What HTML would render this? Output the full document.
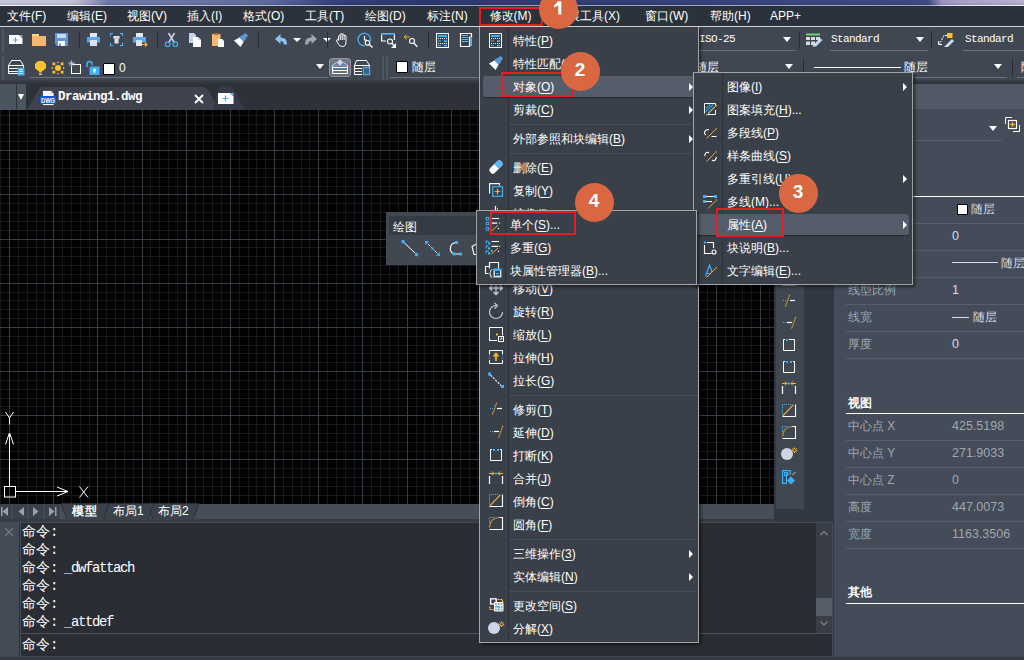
<!DOCTYPE html><html><head><meta charset="utf-8"><title>CAD</title><style>
*{box-sizing:border-box;margin:0;padding:0}
html,body{width:1024px;height:660px;overflow:hidden}
body{position:relative;background:#323842;font-family:"Liberation Sans",sans-serif;font-size:12px;color:#fff;line-height:1}
.a{position:absolute}
.t{position:absolute;white-space:nowrap;line-height:14px;height:14px}
.mono{font-family:"Liberation Mono",monospace}
.u{text-decoration:underline;text-underline-offset:2px;text-decoration-thickness:1px}
.ic{position:absolute;overflow:visible}
.menu{position:absolute;background:#3a4049;border:1px solid #a4a4a4;box-shadow:2px 2px 3px rgba(0,0,0,.5)}
.mi{position:absolute;white-space:nowrap;line-height:14px;height:14px;color:#fff}
.sepv{position:absolute;width:1px;background:#2b3038}
.arr{position:absolute;width:0;height:0;border-left:4px solid #fff;border-top:4px solid transparent;border-bottom:4px solid transparent}
.dn{position:absolute;width:0;height:0;border-top:5px solid #fff;border-left:4.5px solid transparent;border-right:4.5px solid transparent}
.red{position:absolute;border:2px solid #e81c24}
.circ{position:absolute;width:39px;height:39px;border-radius:50%;background:#d96742;color:#fff;font-weight:bold;font-size:19px;text-align:center;line-height:36px}
.ul{position:absolute;height:1px;background:#6d737c}
.pl{position:absolute;left:848px;color:#a0a7b1;white-space:nowrap;line-height:14px}
.pv{position:absolute;left:952px;color:#a0a7b1;white-space:nowrap;line-height:14px;font-size:12.5px}
.ps{position:absolute;left:846px;right:0;height:1px;background:#56606c}
.cmd{position:absolute;left:22px;white-space:nowrap;font-size:14px;line-height:16px;height:16px;color:#fff;font-family:"Liberation Mono",monospace}
.cmd i{font-style:normal;letter-spacing:-1.4px}
</style></head><body>
<div class="a" style="left:0;top:0;width:1024px;height:5px;background:linear-gradient(90deg,#c6c4d9 0,#c2c0d7 75px,#9fa1c3 90px,#6f78a6 108px,#6a74a4 200px,#5e6a9c 270px,#4a568c 300px,#34417a 335px,#2c396c 420px,#313e72 600px,#36437a 700px,#3a477d 800px,#3d4a80 928px,#9d92be 942px,#a99ec5 960px,#b9b0d0 1024px)"></div>
<div class="a" style="left:0;top:3px;width:1024px;height:2px;background:rgba(20,20,50,.08)"></div>
<div class="a" style="left:0;top:5px;width:1024px;height:1px;background:linear-gradient(90deg,#f2f2f6 0,#efeff4 80px,#b9bdd6 110px,#aeb3d0 300px,#9aa0c4 340px,#9ca2c5 930px,#e0dcea 945px,#ece8f2 1024px)"></div>
<div class="a" style="left:0px;top:6px;width:1024px;height:20px;background:#2c323b;"></div>
<div class="a" style="left:0px;top:26px;width:1024px;height:1px;background:#d4d4d4;"></div>
<div class="t" style="left:7px;top:9px;">文件(F)</div>
<div class="t" style="left:67px;top:9px;">编辑(E)</div>
<div class="t" style="left:127px;top:9px;">视图(V)</div>
<div class="t" style="left:187px;top:9px;">插入(I)</div>
<div class="t" style="left:243px;top:9px;">格式(O)</div>
<div class="t" style="left:305px;top:9px;">工具(T)</div>
<div class="t" style="left:365px;top:9px;">绘图(D)</div>
<div class="t" style="left:427px;top:9px;">标注(N)</div>
<div class="t" style="left:489.5px;top:9px;">修改(M)</div>
<div class="t" style="left:556px;top:9px;">扩展工具(X)</div>
<div class="t" style="left:645px;top:9px;">窗口(W)</div>
<div class="t" style="left:710px;top:9px;">帮助(H)</div>
<div class="t" style="left:770px;top:9px;">APP+</div>
<div class="a" style="left:0px;top:27px;width:1024px;height:54px;background:#414752;"></div>
<div class="a" style="left:0;top:80px;width:1024px;height:4px;background:linear-gradient(#3b414b,#2d3138)"></div>
<div class="a" style="left:2px;top:29px;width:2px;height:24px;background:#4c565f;"></div>
<div class="a" style="left:2px;top:56px;width:2px;height:24px;background:#4c565f;"></div>
<svg class="ic" style="left:8px;top:33px" width="16" height="13" viewBox="0 0 16 13"><path d="M1 2H11L14.500 5.500V11H1Z" fill="#fff"/><path d="M11.500 2H14.500V5Z" fill="#6bb6f2"/><path d="M7.500 4.200V9.800M4.700 7H10.300" stroke="#3fb0f4" stroke-width="1"/></svg>
<svg class="ic" style="left:31px;top:32px" width="16" height="15" viewBox="0 0 16 15"><path d="M1 2H8V4.500H1Z" fill="#fad58c"/><path d="M1 4H15V14H1Z" fill="#f6b76f"/></svg>
<svg class="ic" style="left:54px;top:32px" width="16" height="15" viewBox="0 0 16 15"><path d="M1 1H14V14H3L1 12Z" fill="#5d95d6"/><path d="M3 2H12V6H3Z" fill="#cbd8ec"/><path d="M4 9H11V14H4Z" fill="#fff"/><path d="M5 11.500H7V14H5Z" fill="#5d95d6"/></svg>
<div class="a" style="left:79px;top:31px;width:1px;height:18px;background:#2a2e35;"></div>
<svg class="ic" style="left:86px;top:32px" width="16" height="15" viewBox="0 0 16 15"><path d="M4 1H11V6H4Z" fill="#e4e7f0"/><path d="M1 5H14V10.500H1Z" fill="#5aa9ea"/><path d="M4 8H11V14H4Z" fill="#dce1ec"/></svg>
<svg class="ic" style="left:109px;top:32px" width="16" height="15" viewBox="0 0 16 15"><path d="M1.500 4V1.500H4M11 1.500H13.500V4M13.500 11V13.500H11M4 13.500H1.500V11" stroke="#5ab4f5" stroke-width="1.100" fill="none"/><path d="M4.500 4H10.500V6.500H4.500Z" fill="#e4e7f0"/><path d="M5.500 6H9.500V11.500H5.500Z" fill="#dce1ec"/><path d="M4.500 5.500H10.500V7H4.500Z" fill="#b9c6dc"/></svg>
<svg class="ic" style="left:132px;top:32px" width="17" height="16" viewBox="0 0 17 16"><path d="M4 1H11V6H4Z" fill="#e4e7f0"/><path d="M1 5H14V10.500H1Z" fill="#5aa9ea"/><path d="M4 8H10V14H4Z" fill="#dce1ec"/><path d="M10 12.500H15M13 10.500L15 12.500L13 14.500" stroke="#f5b731" stroke-width="1.200" fill="none"/></svg>
<div class="a" style="left:157px;top:31px;width:1px;height:18px;background:#2a2e35;"></div>
<svg class="ic" style="left:164px;top:32px" width="16" height="16" viewBox="0 0 16 16"><path d="M4.500 1L10.500 11M10.500 1L4.500 11" stroke="#c2cde0" stroke-width="1.700" fill="none"/><circle cx="3.700" cy="12.200" r="2.300" stroke="#3fb0f4" stroke-width="1.200" fill="none"/><circle cx="11.300" cy="12.200" r="2.300" stroke="#3fb0f4" stroke-width="1.200" fill="none"/></svg>
<svg class="ic" style="left:188px;top:32px" width="14" height="16" viewBox="0 0 14 16"><path d="M1 1H6L8 3V11H1Z" fill="#c3d4ec"/><path d="M5 5H10L13 8V15H5Z" fill="#fff"/><path d="M10 5V8H13Z" fill="#d0d7e2"/></svg>
<svg class="ic" style="left:211px;top:32px" width="14" height="16" viewBox="0 0 14 16"><path d="M1 2H9.500V14H1Z" fill="#f6b76f"/><path d="M3 1H7.500V3H3Z" fill="#b4622d"/><path d="M7 7H11L13 9V15H7Z" fill="#fff"/><path d="M11 7V9H13Z" fill="#d0d7e2"/></svg>
<svg class="ic" style="left:233px;top:32px" width="16" height="16" viewBox="0 0 16 16"><path d="M9 3.500L12.500 1L15 3.500L12.500 7Z" fill="#5d95d6"/><path d="M6 5L9.500 3L13 7.500L10 10Z" fill="#5d95d6"/><path d="M1 8.500L6.500 5.500L10.500 10L7.500 15Z" fill="#fff"/></svg>
<div class="a" style="left:258px;top:31px;width:1px;height:18px;background:#2a2e35;"></div>
<svg class="ic" style="left:274px;top:33px" width="14" height="12" viewBox="0 0 14 12"><path d="M6.500 1L1 6L6.500 11V8Q9.500 8 10 11.500H13Q13.500 4.500 6.500 4.500Z" fill="#8ec3f5"/></svg>
<div class="dn" style="left:293px;top:38px;border-top-width:4px;border-left-width:4px;border-right-width:4px"></div>
<svg class="ic" style="left:304px;top:33px" width="14" height="12" viewBox="0 0 14 12"><path d="M7.500 1L13 6L7.500 11V8Q4.500 8 4 11.500H1Q.5 4.500 7.500 4.500Z" fill="#a3a7ad"/></svg>
<div class="dn" style="left:323px;top:38px;border-top-width:4px;border-left-width:4px;border-right-width:4px"></div>
<div class="a" style="left:327px;top:31px;width:1px;height:18px;background:#2a2e35;"></div>
<svg class="ic" style="left:335px;top:32px" width="14" height="16" viewBox="0 0 14 16"><path d="M3.500 8.500V4.500Q3.500 3.500 4.500 3.500Q5.300 3.500 5.300 4.500V2.500Q5.300 1.500 6.300 1.500Q7.200 1.500 7.200 2.500V2.800Q7.200 2 8.200 2Q9.100 2 9.100 3V4Q9.100 3.300 10 3.300Q11 3.300 11 4.300V10Q11 14.500 7.500 14.500H7Q5 14.500 3.800 12.500L1.500 9Q1.200 8 2 7.700Q2.800 7.500 3.500 8.500ZM5.300 4.500V8M7.200 2.800V8M9.100 4V8" stroke="#fff" stroke-width="1" fill="none"/></svg>
<svg class="ic" style="left:357px;top:32px" width="17" height="17" viewBox="0 0 17 17"><path d="M8 13.800A6.300 6.300 0 1 1 13.500 9" stroke="#3fb0f4" stroke-width="1.300" fill="none"/><path d="M7.500 4V8H10" stroke="#fff" stroke-width="1.200" fill="none"/><circle cx="10.500" cy="10.800" r="2.300" stroke="#fff" stroke-width="1.100" fill="none"/><path d="M12.300 12.500L15.500 15.500" stroke="#fff" stroke-width="1.300"/></svg>
<svg class="ic" style="left:381px;top:32px" width="16" height="17" viewBox="0 0 16 17"><path d="M.600 2.500V9H5M13.400 2.500V8" stroke="#fff" stroke-width="1.200" fill="none"/><path d="M0 1H14V2.600H0Z" fill="#5ab4f5"/><circle cx="9" cy="9.500" r="2.500" stroke="#fff" stroke-width="1.100" fill="none"/><path d="M10.800 11.300L13 13.500" stroke="#fff" stroke-width="1.300"/><path d="M15 11V16H10Z" fill="#fff"/></svg>
<svg class="ic" style="left:403px;top:32px" width="16" height="16" viewBox="0 0 16 16"><path d="M1.200 5H6.500M3.500 2.700L1.200 5L3.500 7.300" stroke="#f5b731" stroke-width="1" fill="none"/><circle cx="9" cy="9" r="2.500" stroke="#fff" stroke-width="1.100" fill="none"/><path d="M10.800 11L14.300 14.800" stroke="#fff" stroke-width="1.300"/></svg>
<div class="a" style="left:428px;top:31px;width:1px;height:18px;background:#2a2e35;"></div>
<svg class="ic" style="left:435px;top:32px" width="15" height="17" viewBox="0 0 15 17"><rect x="1.500" y="1.500" width="12" height="14" fill="none" stroke="#fff" stroke-width="1"/><path d="M3 3H12V5H3Z" fill="#3fb0f4"/><path d="M3 6.500H4M5 6.500H6M7 6.500H8M9 6.500H10M11 6.500H12M3 11.500H4M5 11.500H6M7 11.500H8M9 11.500H10M11 11.500H12" stroke="#dfe6f2" stroke-width="1"/><path d="M3 8.500H6V9.500H3ZM9 8.300H12V10H9ZM3 13H6V14H3ZM9 12.800H12V14.500H9Z" fill="#3fb0f4"/></svg>
<svg class="ic" style="left:459px;top:32px" width="15" height="17" viewBox="0 0 15 17"><path d="M1.500 1.500H12.500V5H10.500V14.500H1.500Z" fill="#3b404a" stroke="#fff" stroke-width="1.200"/><path d="M3 3H9V4H3ZM3 5H9V6H3ZM3 7H9V8H3ZM3 9H9V10H3Z" fill="#5ab4f5"/><path d="M11.200 6.200H13V14H11.200Z" fill="#5ab4f5"/></svg>
<svg class="ic" style="left:8px;top:59px" width="18" height="18" viewBox="0 0 18 18"><g stroke="#fff" stroke-width="1" fill="none"><path d="M3.500 1.500H12.500L15.500 6.500H0.500Z"/><path d="M0.500 6.500V9.500H10M0.500 9.500V12.500H10M0.500 12.500V14.500H10M15.500 6.500V9"/></g><path d="M9.500 8.500H16.500V16.500H9.500Z" fill="#3fb0f4"/><path d="M11 10.500H15M11 12.500H15M11 14.500H15" stroke="#dff0ff" stroke-width="1"/></svg>
<svg class="ic" style="left:34px;top:60px" width="13" height="16" viewBox="0 0 13 16"><path d="M4 1H9L12 4V8L9 11H4L1 8V4Z" fill="#fbc02d"/><path d="M5 11H8V12.500H5Z" fill="#fbc02d"/><path d="M5 13.500H8V15H5Z" fill="#fbc02d"/></svg>
<svg class="ic" style="left:51px;top:61px" width="14" height="14" viewBox="0 0 14 14"><circle cx="7" cy="7" r="3" fill="#fbc02d"/><path d="M1.500 1.500H4.300V4.300H1.500ZM9.700 1.500H12.500V4.300H9.700ZM1.500 9.700H4.300V12.500H1.500ZM9.700 9.700H12.500V12.500H9.700Z" fill="#fbc02d"/><path d="M7 .3L8.200 2H5.800ZM7 13.700L8.200 12H5.800ZM.3 7L2 5.800V8.200ZM13.700 7L12 5.800V8.200Z" fill="#fbc02d"/></svg>
<svg class="ic" style="left:68px;top:60px" width="15" height="15" viewBox="0 0 15 15"><rect x="3.500" y="4.500" width="9" height="9" fill="none" stroke="#fff" stroke-width="1"/><path d="M3.500 0.500V7M0.500 3.700H7M1.300 1.500L5.700 5.900M5.700 1.500L1.300 5.900" stroke="#b9bdc4" stroke-width="1"/></svg>
<svg class="ic" style="left:85px;top:60px" width="16" height="16" viewBox="0 0 16 16"><path d="M2 7V4Q2 1.500 4.500 1.500Q7 1.500 7 4V5" stroke="#3fb0f4" stroke-width="1.600" fill="none"/><path d="M4.500 6.500H14.500V15H4.500Z" fill="#3fb0f4"/><circle cx="9.500" cy="10" r="1.500" fill="#fff"/><path d="M8.800 10.500H10.200V13H8.800Z" fill="#fff"/></svg>
<div class="a" style="left:103px;top:63px;width:12px;height:12px;background:#fff;border:1px solid #000;border-radius:1px"></div>
<div class="t" style="left:119px;top:61px;">0</div>
<div class="ul" style="left:30px;top:77px;width:298px"></div>
<div class="dn" style="left:316px;top:64px"></div>
<div class="a" style="left:329px;top:58px;width:22px;height:19px;border-radius:3px;background:linear-gradient(#757c86,#636a74);border:1px solid #8f959e"></div>
<svg class="ic" style="left:331px;top:59px" width="18" height="17" viewBox="0 0 18 17"><path d="M1.500 6.500Q3.500 4 6 3.500M12 3.500Q14.500 4 16.500 6.500" stroke="#8ec3f5" stroke-width="1.100" fill="none"/><path d="M9 .3L12.200 3.500L9 6.700L5.800 3.500Z" fill="#cfd6e4"/><path d="M1.500 6.500H16.500" stroke="#3fb0f4" stroke-width="1"/><g stroke="#fff" stroke-width="1" fill="none"><path d="M1.500 8.500H16.500M1.500 11.500H16.500M1.500 14.500H16.500M1.500 6.500V14.500M16.500 6.500V14.500"/></g></svg>
<svg class="ic" style="left:353px;top:59px" width="18" height="18" viewBox="0 0 18 18"><g stroke="#fff" stroke-width="1" fill="none"><path d="M3.500 1.500H13.500L16.500 6.500H1.500Z"/><path d="M1.500 6.500V9.500H9M1.500 9.500V12.500H9M1.500 12.500V15.500H9M16.500 6.500V8"/></g><rect x="10.500" y="8.500" width="6" height="7" fill="none" stroke="#3fb0f4" stroke-width="1.400"/><path d="M12.500 10.500H14.500M12.500 13H14.500" stroke="#3fb0f4" stroke-width="1.200"/></svg>
<div class="a" style="left:382px;top:56px;width:2px;height:24px;background:#4c565f;"></div>
<div class="a" style="left:386px;top:56px;width:2px;height:24px;background:#4c565f;"></div>
<div class="a" style="left:396px;top:61px;width:12px;height:12px;background:#fff;border:1px solid #000;border-radius:1px"></div>
<div class="t" style="left:412px;top:60px;">随层</div>
<div class="ul" style="left:390px;top:77px;width:90px"></div>
<div class="t mono" style="left:699px;top:32px;font-size:11px;letter-spacing:-0.6px">ISO-25</div>
<div class="dn" style="left:783px;top:37px"></div>
<div class="ul" style="left:699px;top:50px;width:97px"></div>
<div class="a" style="left:799px;top:31px;width:1px;height:18px;background:#2a2e35;"></div>
<svg class="ic" style="left:806px;top:33px" width="18" height="15" viewBox="0 0 18 15"><path d="M0 0.500H14V2.500H0Z" fill="#6dd07d"/><path d="M0 4H4V7H0ZM5 4H9V7H5ZM10 4H14V7H10ZM0 8.500H4V12H0ZM5 8.500H9V12H5Z" fill="#dadada"/><path d="M14 5L16.500 7L10 13.500H6Z" fill="#c5dcf5"/></svg>
<div class="t mono" style="left:831px;top:32px;font-size:11px;letter-spacing:-0.6px">Standard</div>
<div class="dn" style="left:916px;top:37px"></div>
<div class="ul" style="left:830px;top:50px;width:98px"></div>
<div class="a" style="left:931px;top:31px;width:1px;height:18px;background:#2a2e35;"></div>
<svg class="ic" style="left:938px;top:33px" width="18" height="15" viewBox="0 0 18 15"><path d="M9 0H14.500V5H9Z" fill="#fbc02d"/><path d="M9 2.500H6L1.500 11" stroke="#fff" stroke-width="1" stroke-dasharray="2 1" fill="none"/><path d="M0.500 8V11.500H4" stroke="#fff" stroke-width="1" fill="none"/><path d="M14 6L16 8L10 14H6Z" fill="#c5dcf5"/></svg>
<div class="t mono" style="left:965px;top:32px;font-size:11px;letter-spacing:-0.6px">Standard</div>
<div class="ul" style="left:963px;top:50px;width:61px"></div>
<div class="t" style="left:695px;top:60px;">随层</div>
<div class="dn" style="left:785px;top:64px"></div>
<div class="a" style="left:803px;top:58px;width:1px;height:18px;background:#2a2e35;"></div>
<div class="a" style="left:814px;top:67px;width:87px;height:1px;background:#fff;"></div>
<div class="t" style="left:904px;top:60px;">随层</div>
<div class="dn" style="left:994px;top:64px"></div>
<div class="a" style="left:1012px;top:58px;width:1px;height:18px;background:#2a2e35;"></div>
<div class="t" style="left:1021px;top:60px;">随层</div>
<div class="ul" style="left:809px;top:77px;width:198px"></div>
<div class="ul" style="left:1017px;top:77px;width:7px"></div>
<div class="a" style="left:0px;top:84px;width:774px;height:26px;background:#2d3138;"></div>
<div class="a" style="left:0px;top:84px;width:16px;height:26px;background:#4b5560;"></div>
<div class="a" style="left:17px;top:84px;width:9px;height:26px;background:#4b5560;"></div>
<div class="dn" style="left:18px;top:94px;border-top-width:6px;border-left-width:3.5px;border-right-width:3.5px"></div>
<svg class="ic" style="left:0;top:84px" width="260" height="26" viewBox="0 84 260 26"><path d="M27 110 L39 89 Q40 87 43 87 L202 87 Q206 87 208 90 L220 110 Z" fill="#3e434d"/><path d="M213 110 L218 88 Q219 86 221 86 L230 86 Q232 86 233 88 L245 110 Z" fill="#343b46"/></svg>
<svg class="ic" style="left:40px;top:90px" width="17" height="17" viewBox="0 0 17 17"><path d="M2.500 0.500H11L14 3.500V15.500H2.500Z" fill="#f4f4f4" stroke="#222" stroke-width=".6"/><path d="M11 0.500V3.500H14Z" fill="#bbb"/><path d="M0 6H16V14H0Z" fill="#1456d8"/><text x="8" y="12.600" font-family="Liberation Sans,sans-serif" font-size="7" font-weight="bold" fill="#fff" text-anchor="middle" textLength="14" lengthAdjust="spacingAndGlyphs">DWG</text></svg>
<div class="t mono" style="left:58px;top:90px;font-weight:bold;font-size:12.5px;letter-spacing:-0.5px">Drawing1.dwg</div>
<svg class="ic" style="left:194px;top:94px" width="10" height="10" viewBox="0 0 10 10"><path d="M1 1L9 9M9 1L1 9" stroke="#fff" stroke-width="1.8" fill="none"/></svg>
<svg class="ic" style="left:218px;top:93px" width="16" height="12" viewBox="0 0 16 12"><path d="M0 0H12L15.500 3.500V11H0Z" fill="#fff"/><path d="M12 0H15.500V3.500Z" fill="#6bb6f2"/><path d="M7.500 2.500V8.500M4.500 5.500H10.500" stroke="#3fb0f4" stroke-width="1.200"/></svg>
<div class="a" style="left:0px;top:110px;width:774px;height:394px;background:#020203;"></div>
<svg class="ic" style="left:0;top:110px" width="774" height="394" viewBox="0 110 774 394" shape-rendering="crispEdges"><path d="M0 110h1v394h-1zM18 110h1v394h-1zM27 110h1v394h-1zM36 110h1v394h-1zM44 110h1v394h-1zM62 110h1v394h-1zM71 110h1v394h-1zM80 110h1v394h-1zM89 110h1v394h-1zM106 110h1v394h-1zM115 110h1v394h-1zM124 110h1v394h-1zM133 110h1v394h-1zM150 110h1v394h-1zM159 110h1v394h-1zM168 110h1v394h-1zM177 110h1v394h-1zM195 110h1v394h-1zM203 110h1v394h-1zM212 110h1v394h-1zM221 110h1v394h-1zM239 110h1v394h-1zM248 110h1v394h-1zM256 110h1v394h-1zM265 110h1v394h-1zM283 110h1v394h-1zM292 110h1v394h-1zM301 110h1v394h-1zM309 110h1v394h-1zM327 110h1v394h-1zM336 110h1v394h-1zM345 110h1v394h-1zM354 110h1v394h-1zM371 110h1v394h-1zM380 110h1v394h-1zM389 110h1v394h-1zM398 110h1v394h-1zM416 110h1v394h-1zM424 110h1v394h-1zM433 110h1v394h-1zM442 110h1v394h-1zM460 110h1v394h-1zM469 110h1v394h-1zM477 110h1v394h-1zM486 110h1v394h-1zM504 110h1v394h-1zM513 110h1v394h-1zM522 110h1v394h-1zM530 110h1v394h-1zM548 110h1v394h-1zM557 110h1v394h-1zM566 110h1v394h-1zM575 110h1v394h-1zM592 110h1v394h-1zM601 110h1v394h-1zM610 110h1v394h-1zM619 110h1v394h-1zM636 110h1v394h-1zM645 110h1v394h-1zM654 110h1v394h-1zM663 110h1v394h-1zM681 110h1v394h-1zM689 110h1v394h-1zM698 110h1v394h-1zM707 110h1v394h-1zM725 110h1v394h-1zM734 110h1v394h-1zM742 110h1v394h-1zM751 110h1v394h-1zM769 110h1v394h-1zM0 115h774v1h-774zM0 124h774v1h-774zM0 133h774v1h-774zM0 141h774v1h-774zM0 159h774v1h-774zM0 168h774v1h-774zM0 177h774v1h-774zM0 186h774v1h-774zM0 203h774v1h-774zM0 212h774v1h-774zM0 221h774v1h-774zM0 230h774v1h-774zM0 247h774v1h-774zM0 256h774v1h-774zM0 265h774v1h-774zM0 274h774v1h-774zM0 292h774v1h-774zM0 300h774v1h-774zM0 309h774v1h-774zM0 318h774v1h-774zM0 336h774v1h-774zM0 345h774v1h-774zM0 353h774v1h-774zM0 362h774v1h-774zM0 380h774v1h-774zM0 389h774v1h-774zM0 398h774v1h-774zM0 406h774v1h-774zM0 424h774v1h-774zM0 433h774v1h-774zM0 442h774v1h-774zM0 451h774v1h-774zM0 468h774v1h-774zM0 477h774v1h-774zM0 486h774v1h-774zM0 495h774v1h-774z" fill="#16191c"/><path d="M9 110h1v394h-1zM53 110h1v394h-1zM97 110h1v394h-1zM142 110h1v394h-1zM186 110h1v394h-1zM230 110h1v394h-1zM274 110h1v394h-1zM318 110h1v394h-1zM362 110h1v394h-1zM407 110h1v394h-1zM451 110h1v394h-1zM495 110h1v394h-1zM539 110h1v394h-1zM583 110h1v394h-1zM628 110h1v394h-1zM672 110h1v394h-1zM716 110h1v394h-1zM760 110h1v394h-1zM0 150h774v1h-774zM0 194h774v1h-774zM0 239h774v1h-774zM0 283h774v1h-774zM0 327h774v1h-774zM0 371h774v1h-774zM0 415h774v1h-774zM0 459h774v1h-774z" fill="#353c45"/></svg>
<svg class="ic" style="left:0;top:405px" width="100" height="100" viewBox="0 405 100 100"><g stroke="#fff" stroke-width="1" fill="none"><path d="M9.5 486V434M5.5 444.500L9 434L9.5 433L10 434L13.500 444.500"/><path d="M15 491.500H68M57 487L68 491.500L57 496"/><rect x="4.500" y="486.500" width="11" height="10.500"/><path d="M5.500 412L9.500 418L13.500 412M9.500 418V424.500"/><path d="M79.500 486.500L88 497.500M88 486.500L79.500 497.500"/></g></svg>
<div class="a" style="left:0px;top:504px;width:774px;height:15px;background:#464e5a;"></div>
<div class="a" style="left:0px;top:519px;width:774px;height:3px;background:#363c45;"></div>
<svg class="ic" style="left:0;top:504px" width="210" height="16" viewBox="0 504 210 16"><path d="M0 504H11.500V519H0ZM13 504H27.500V519H13ZM29 504H43.500V519H29ZM45 504H59.500V519H45Z" fill="#3b414b"/><g fill="#3c424c" stroke="#2b3038" stroke-width=".9"><path d="M146 503.500H199L193 519.500H153Z"/><path d="M98 503.500H154L148 519.500H105Z"/><path d="M61 503.500H109L103 519.500H67Z"/></g><path d="M60 519.600H200" stroke="#3c424c" stroke-width="1.400"/><g fill="#9aa1ab"><path d="M1 507h1.500v9H1zM8 507v9l-5.500-4.500z"/><path d="M24 507v9l-5.500-4.500z"/><path d="M33 507v9l5.500-4.500z"/><path d="M49 507v9l5.500-4.500zM55 507h1.500v9H55z"/></g></svg>
<div class="t" style="left:72px;top:504px;font-weight:bold;letter-spacing:0.5px">模型</div>
<div class="t" style="left:113px;top:504px;">布局1</div>
<div class="t" style="left:158px;top:504px;">布局2</div>
<div class="a" style="left:0px;top:522px;width:832px;height:134px;background:#2a2d33;"></div>
<div class="a" style="left:0px;top:522px;width:832px;height:1px;background:#434b57;"></div>
<div class="a" style="left:0px;top:523px;width:19px;height:133px;background:#434b56;"></div>
<div class="a" style="left:19px;top:523px;width:1px;height:133px;background:#2c3036;"></div>
<div class="a" style="left:20px;top:523px;width:1px;height:133px;background:#4a5059;"></div>
<svg class="ic" style="left:4px;top:527px" width="10" height="10" viewBox="0 0 10 10"><path d="M1 1L9 9M9 1L1 9" stroke="#6c727c" stroke-width="1.6" fill="none"/></svg>
<div class="cmd" style="top:524px">命令<i>:</i></div>
<div class="cmd" style="top:542px">命令<i>:</i></div>
<div class="cmd" style="top:560px">命令<i>: _dwfattach</i></div>
<div class="cmd" style="top:578px">命令<i>:</i></div>
<div class="cmd" style="top:596px">命令<i>:</i></div>
<div class="cmd" style="top:614px">命令<i>: _attdef</i></div>
<div class="a" style="left:21px;top:633px;width:811px;height:1px;background:#4a5160;"></div>
<div class="cmd" style="top:637px">命令<i>:</i></div>
<div class="a" style="left:816px;top:523px;width:16px;height:110px;background:#393d46;"></div>
<div class="a" style="left:816px;top:598px;width:16px;height:18px;background:#555d69;"></div>
<svg class="ic" style="left:816px;top:523px" width="16" height="110" viewBox="0 0 16 110"><path d="M4.500 12L8 8.500L11.500 12M4.500 98.500L8 102L11.500 98.500" stroke="#7b818b" stroke-width="1.2" fill="none"/></svg>
<div class="a" style="left:832px;top:522px;width:1px;height:134px;background:#434b57;"></div>
<div class="a" style="left:0px;top:656px;width:1024px;height:4px;background:#353b44;"></div>
<div class="a" style="left:0px;top:656px;width:1024px;height:1px;background:#3f4650;"></div>
<div class="a" style="left:776px;top:84px;width:28px;height:425px;background:#414751;"></div>
<svg class="ic" style="left:781px;top:293px" width="16" height="16" viewBox="0 0 16 16"><path d="M2 7.500H3M4 7.500H5" stroke="#3fb0f4" stroke-width="1"/><path d="M9 7.500H14" stroke="#fff" stroke-width="1.200"/><path d="M8.700 1.800L4.300 13.800" stroke="#bb8c38" stroke-width="1.300" stroke-dasharray="2.200 .400"/></svg>
<svg class="ic" style="left:781px;top:315px" width="16" height="16" viewBox="0 0 16 16"><path d="M2 7.500H3M4 7.500H5" stroke="#3fb0f4" stroke-width="1"/><path d="M6 7.500H11" stroke="#fff" stroke-width="1.200"/><path d="M14.900 1.800L10.500 13.800" stroke="#bb8c38" stroke-width="1.300" stroke-dasharray="2.200 .400"/></svg>
<svg class="ic" style="left:781px;top:337px" width="16" height="16" viewBox="0 0 16 16"><path d="M8 2.500H13.500V13.500H2.500V2.500H4" stroke="#fff" stroke-width="1" fill="none"/><path d="M5 2H7V4H5Z" fill="#3fb0f4"/></svg>
<svg class="ic" style="left:781px;top:359px" width="16" height="16" viewBox="0 0 16 16"><path d="M12 2.500H13.500V13.500H2.500V2.500H4" stroke="#fff" stroke-width="1" fill="none"/><path d="M5 2H7V4H5ZM9 2H11V4H9Z" fill="#3fb0f4"/></svg>
<svg class="ic" style="left:781px;top:380px" width="16" height="16" viewBox="0 0 16 16"><path d="M1.500 6V14M14.500 6V14" stroke="#fff" stroke-width="1.200" fill="none"/><path d="M1 3.500H6M4 1.500L6 3.500L4 5.500M15 3.500H10M12 1.500L10 3.500L12 5.500" stroke="#f5b731" stroke-width="1" fill="none"/><path d="M7 2.500H9V4.500H7Z" fill="#3fb0f4"/></svg>
<svg class="ic" style="left:781px;top:403px" width="16" height="16" viewBox="0 0 16 16"><path d="M14.500 1.500V13.500H1.500" stroke="#fff" stroke-width="1.100" fill="none"/><path d="M1.500 11.500V1.500H11" stroke="#3fb0f4" stroke-width="1" stroke-dasharray="1.200 1" fill="none"/><path d="M1.800 12.800L12.300 1.800" stroke="#f5b731" stroke-width="1.100"/></svg>
<svg class="ic" style="left:781px;top:425px" width="16" height="16" viewBox="0 0 16 16"><path d="M11 1.500H14.500V13.500H1.500" stroke="#fff" stroke-width="1.100" fill="none"/><path d="M1.500 7V1.500H7" stroke="#3fb0f4" stroke-width="1" stroke-dasharray="1.200 1" fill="none"/><path d="M1.500 11.500Q2 2 11.500 1.500" stroke="#bb8c38" stroke-width="1.200" fill="none"/></svg>
<svg class="ic" style="left:781px;top:446px" width="17" height="16" viewBox="0 0 17 16"><circle cx="6" cy="8" r="6" fill="#ccd5e6"/><path d="M13.500 1.500V7M10.700 4.300H16.300M11.500 2.300L15.500 6.300M15.500 2.300L11.500 6.300" stroke="#fbc02d" stroke-width="1"/><circle cx="13.500" cy="4.300" r="1.100" fill="#3a4049"/></svg>
<svg class="ic" style="left:781px;top:469px" width="16" height="16" viewBox="0 0 16 16"><path d="M1.600 1.600H9.400V5H5.400V14.400H1.600Z" stroke="#3fb0f4" stroke-width="1.200" fill="none"/><rect x="3.500" y="3.500" width="3" height="3" fill="none" stroke="#3fb0f4" stroke-width="1"/><path d="M10 7.500L14 11.500L10 15.500L6 11.500Z" fill="#3fb0f4"/><path d="M11.500 6L14.500 3" stroke="#8a8f98" stroke-width="1.600"/></svg>
<div class="a" style="left:782px;top:285px;width:14px;height:1px;background:#9a9a9a;"></div>
<div class="a" style="left:834px;top:84px;width:190px;height:572px;background:#434c58;"></div>
<div class="a" style="left:834px;top:84px;width:190px;height:25px;background:#515a66;"></div>
<div class="dn" style="left:989px;top:126px"></div>
<svg class="ic" style="left:1005px;top:117px" width="16" height="16" viewBox="0 0 16 16"><path d="M.5 7V.5H7M14.500 8V14.500H8" stroke="#fff" stroke-width="1" fill="none"/><rect x="3.500" y="3.500" width="8" height="8" fill="#434b57" stroke="#fff" stroke-width="1.200"/><path d="M7.500 5.200V9.800M5.200 7.500H9.800" stroke="#f5b731" stroke-width="1.300"/></svg>
<div class="a" style="left:914px;top:140px;width:88px;height:1px;background:#56606c;"></div>
<div class="a" style="left:846px;top:196px;width:178px;height:1px;background:#fff;"></div>
<div class="a" style="left:957px;top:204px;width:11px;height:11px;background:#fff;border:1px solid #000"></div>
<div class="t" style="left:971px;top:202px;color:#d8dde6">随层</div>
<div class="ps" style="top:223px"></div>
<div class="ps" style="top:250px"></div>
<div class="ps" style="top:277px"></div>
<div class="ps" style="top:304px"></div>
<div class="ps" style="top:331px"></div>
<div class="ps" style="top:358px"></div>
<div class="pv" style="top:229px;color:#d8dde6">0</div>
<div class="a" style="left:952px;top:262px;width:46px;height:1px;background:#d8dde6;"></div>
<div class="t" style="left:1001px;top:256px;color:#d8dde6">随层</div>
<div class="pl" style="top:283px">线型比例</div><div class="pv" style="top:283px;color:#d8dde6">1</div>
<div class="pl" style="top:310px">线宽</div>
<div class="a" style="left:952px;top:317px;width:17px;height:1px;background:#d8dde6;"></div>
<div class="t" style="left:973px;top:310px;color:#d8dde6">随层</div>
<div class="pl" style="top:337px">厚度</div><div class="pv" style="top:337px;color:#d8dde6">0</div>
<div class="t" style="left:848px;top:396px;font-weight:bold">视图</div>
<div class="a" style="left:846px;top:413px;width:178px;height:1px;background:#fff;"></div>
<div class="pl" style="top:419px">中心点 X</div><div class="pv" style="top:419px">425.5198</div>
<div class="ps" style="top:440px"></div>
<div class="pl" style="top:446px">中心点 Y</div><div class="pv" style="top:446px">271.9033</div>
<div class="ps" style="top:467px"></div>
<div class="pl" style="top:473px">中心点 Z</div><div class="pv" style="top:473px">0</div>
<div class="ps" style="top:494px"></div>
<div class="pl" style="top:500px">高度</div><div class="pv" style="top:500px">447.0073</div>
<div class="ps" style="top:521px"></div>
<div class="pl" style="top:527px">宽度</div><div class="pv" style="top:527px">1163.3506</div>
<div class="ps" style="top:548px"></div>
<div class="t" style="left:848px;top:585px;font-weight:bold">其他</div>
<div class="a" style="left:846px;top:603px;width:178px;height:1px;background:#fff;"></div>
<div class="a" style="left:386px;top:212px;width:100px;height:53px;background:#414852;"></div>
<div class="a" style="left:389px;top:216px;width:95px;height:19px;background:#353b44;"></div>
<div class="t" style="left:393px;top:220px;">绘图</div>
<svg class="ic" style="left:401px;top:240px" width="18" height="18" viewBox="0 0 18 18"><path d="M2.500 2L15.500 14.500" stroke="#fff" stroke-width="1"/><path d="M.600 0H3.600V3.200H.600ZM14 13H17V16.200H14Z" fill="#3fb0f4"/></svg>
<svg class="ic" style="left:424px;top:240px" width="18" height="18" viewBox="0 0 18 18"><path d="M1 1L16 16" stroke="#fff" stroke-width="1" stroke-dasharray="3 1.500"/><path d="M1 1L5 1.500L1.500 5ZM16 16L12 15.500L15.500 12Z" fill="#3fb0f4"/><path d="M7.500 7.500H9.500V9.500H7.500Z" fill="#3fb0f4"/></svg>
<svg class="ic" style="left:447px;top:241px" width="18" height="16" viewBox="0 0 18 16"><path d="M9 1.500A6 6 0 0 0 7 13H13" stroke="#fff" stroke-width="1.200" fill="none"/><path d="M8 0H11V3H8ZM5.500 11.500H8.500V14.500H5.500ZM12 11.500H15V14.500H12Z" fill="#3fb0f4"/></svg>
<svg class="ic" style="left:470px;top:242px" width="14" height="14" viewBox="0 0 14 14"><path d="M8 1L2 4.500L4 12.500H12" stroke="#fff" stroke-width="1.100" fill="none"/></svg>
<div class="menu" style="left:479px;top:27px;width:220px;height:616px;border-top:none"></div>
<div class="a" style="left:508px;top:28px;width:1px;height:613px;background:#2d323a;"></div>
<div class="a" style="left:483px;top:76px;width:211px;height:21px;background:#545d69;border-radius:2px;box-shadow:0 1px 1px rgba(0,0,0,.35)"></div>
<div class="mi" style="left:513px;top:34px">特性(<span class="u">P</span>)</div>
<svg class="ic" style="left:488px;top:32px" width="15" height="17" viewBox="0 0 15 17"><rect x="1.500" y="1.500" width="12" height="14" fill="none" stroke="#fff" stroke-width="1"/><path d="M3 3H12V5H3Z" fill="#3fb0f4"/><path d="M3 6.500H4M5 6.500H6M7 6.500H8M9 6.500H10M11 6.500H12M3 11.500H4M5 11.500H6M7 11.500H8M9 11.500H10M11 11.500H12" stroke="#dfe6f2" stroke-width="1"/><path d="M3 8.500H6V9.500H3ZM9 8.300H12V10H9ZM3 13H6V14H3ZM9 12.800H12V14.500H9Z" fill="#3fb0f4"/></svg>
<div class="mi" style="left:513px;top:57px">特性匹配(<span class="u">M</span>)</div>
<svg class="ic" style="left:488px;top:55px" width="16" height="16" viewBox="0 0 16 16"><path d="M9 3.500L12.500 1L15 3.500L12.500 7Z" fill="#5d95d6"/><path d="M6 5L9.500 3L13 7.500L10 10Z" fill="#5d95d6"/><path d="M1 8.500L6.500 5.500L10.500 10L7.500 15Z" fill="#fff"/></svg>
<div class="mi" style="left:513px;top:80px">对象(<span class="u">O</span>)</div>
<div class="arr" style="left:689px;top:83px"></div>
<div class="mi" style="left:513px;top:103px">剪裁(<span class="u">C</span>)</div>
<div class="arr" style="left:689px;top:106px"></div>
<div class="mi" style="left:513px;top:132px">外部参照和块编辑(<span class="u">B</span>)</div>
<div class="arr" style="left:689px;top:135px"></div>
<div class="mi" style="left:513px;top:161px">删除(<span class="u">E</span>)</div>
<svg class="ic" style="left:488px;top:159px" width="16" height="16" viewBox="0 0 16 16"><g transform="rotate(-45 8 8)"><rect x=".35" y="4.750" width="15.300" height="6.500" rx="2.500" fill="#fff"/><path d="M8.600 4.750H13.150Q15.650 4.750 15.650 7.250V8.750Q15.650 11.250 13.150 11.250H8.600Z" fill="#5bb5f5"/></g></svg>
<div class="mi" style="left:513px;top:184px">复制(<span class="u">Y</span>)</div>
<svg class="ic" style="left:488px;top:182px" width="16" height="16" viewBox="0 0 16 16"><path d="M1.600 11.500V1.600H11.500V3.500" stroke="#fff" stroke-width="1.200" fill="none"/><rect x="4.700" y="4.700" width="9.800" height="9.600" fill="none" stroke="#3fb0f4" stroke-width="1.200"/><path d="M9.500 6.800V12.200M6.800 9.500H12.200" stroke="#f5b731" stroke-width="1.200"/></svg>
<div class="mi" style="left:513px;top:207px">镜像(<span class="u">I</span>)</div>
<svg class="ic" style="left:488px;top:205px" width="16" height="16" viewBox="0 0 16 16"><path d="M7.500 1V16" stroke="#fff" stroke-width="1.200"/><path d="M9.500 3V16" stroke="#f5b731" stroke-width="1" stroke-dasharray="2 1"/><path d="M5 6V13L1 13Z" fill="none" stroke="#fff"/></svg>
<div class="mi" style="left:513px;top:230px">偏移(<span class="u">S</span>)</div>
<div class="mi" style="left:513px;top:253px">阵列(<span class="u">A</span>)</div>
<div class="mi" style="left:513px;top:282px">移动(<span class="u">V</span>)</div>
<svg class="ic" style="left:488px;top:280px" width="16" height="16" viewBox="0 0 16 16"><path d="M8 1.500V14.500M1.500 8H14.500M5.500 4L8 1.500L10.500 4M5.500 12L8 14.500L10.500 12M4 5.500L1.500 8L4 10.500M12 5.500L14.500 8L12 10.500" stroke="#c3cde0" stroke-width="1.300" fill="none"/></svg>
<div class="mi" style="left:513px;top:305px">旋转(<span class="u">R</span>)</div>
<svg class="ic" style="left:488px;top:303px" width="16" height="16" viewBox="0 0 16 16"><path d="M8 2.500A6.500 6.500 0 1 0 14.500 9" stroke="#c3cde0" stroke-width="1.200" fill="none"/><path d="M6.500 0L9.500 2.600L6.500 5.500" stroke="#c3cde0" stroke-width="1.200" fill="none"/></svg>
<div class="mi" style="left:513px;top:328px">缩放(<span class="u">L</span>)</div>
<svg class="ic" style="left:488px;top:326px" width="16" height="16" viewBox="0 0 16 16"><rect x="1.500" y="1.500" width="13" height="13" fill="none" stroke="#fff" stroke-width="1"/><path d="M8 7.500H10V9.500H8Z" fill="#f5b731"/><path d="M9 9.500H16V16H9Z" fill="#3a4049"/><rect x="10.500" y="10.500" width="5" height="5" fill="none" stroke="#fff" stroke-width="1"/><path d="M12 14L14 12M12.500 12H14V13.500" stroke="#fff" stroke-width=".8" fill="none"/></svg>
<div class="mi" style="left:513px;top:351px">拉伸(<span class="u">H</span>)</div>
<svg class="ic" style="left:488px;top:349px" width="16" height="16" viewBox="0 0 16 16"><path d="M1.500 5V1.500H14.500V5M1.500 11V14.500H14.500V11" stroke="#fff" stroke-width="1" fill="none"/><path d="M1.500 5V11M14.500 5V11" stroke="#3fb0f4" stroke-width="1" stroke-dasharray="1 1"/><path d="M8 12V5M5.500 7.500L8 4.500L10.500 7.500" stroke="#f5b731" stroke-width="1.700" fill="none"/></svg>
<div class="mi" style="left:513px;top:374px">拉长(<span class="u">G</span>)</div>
<svg class="ic" style="left:488px;top:372px" width="16" height="17" viewBox="0 0 16 17"><path d="M2.500 3L14 14.500" stroke="#fff" stroke-width="1.100" stroke-dasharray="2.200 1.200"/><path d="M0 .5H3V3.500H0ZM13 13H16V16H13Z" fill="#3fb0f4"/></svg>
<div class="mi" style="left:513px;top:403px">修剪(<span class="u">T</span>)</div>
<svg class="ic" style="left:488px;top:401px" width="16" height="16" viewBox="0 0 16 16"><path d="M2 7.500H3M4 7.500H5" stroke="#3fb0f4" stroke-width="1"/><path d="M9 7.500H14" stroke="#fff" stroke-width="1.200"/><path d="M8.700 1.800L4.300 13.800" stroke="#bb8c38" stroke-width="1.300" stroke-dasharray="2.200 .400"/></svg>
<div class="mi" style="left:513px;top:426px">延伸(<span class="u">D</span>)</div>
<svg class="ic" style="left:488px;top:424px" width="16" height="16" viewBox="0 0 16 16"><path d="M2 7.500H3M4 7.500H5" stroke="#3fb0f4" stroke-width="1"/><path d="M6 7.500H11" stroke="#fff" stroke-width="1.200"/><path d="M14.900 1.800L10.500 13.800" stroke="#bb8c38" stroke-width="1.300" stroke-dasharray="2.200 .400"/></svg>
<div class="mi" style="left:513px;top:449px">打断(<span class="u">K</span>)</div>
<svg class="ic" style="left:488px;top:447px" width="16" height="16" viewBox="0 0 16 16"><path d="M12 2.500H13.500V13.500H2.500V2.500H4" stroke="#fff" stroke-width="1" fill="none"/><path d="M5 2H7V4H5ZM9 2H11V4H9Z" fill="#3fb0f4"/></svg>
<div class="mi" style="left:513px;top:472px">合并(<span class="u">J</span>)</div>
<svg class="ic" style="left:488px;top:470px" width="16" height="16" viewBox="0 0 16 16"><path d="M1.500 6V14M14.500 6V14" stroke="#fff" stroke-width="1.200" fill="none"/><path d="M1 3.500H6M4 1.500L6 3.500L4 5.500M15 3.500H10M12 1.500L10 3.500L12 5.500" stroke="#f5b731" stroke-width="1" fill="none"/><path d="M7 2.500H9V4.500H7Z" fill="#3fb0f4"/></svg>
<div class="mi" style="left:513px;top:495px">倒角(<span class="u">C</span>)</div>
<svg class="ic" style="left:488px;top:493px" width="16" height="16" viewBox="0 0 16 16"><path d="M14.500 1.500V13.500H1.500" stroke="#fff" stroke-width="1.100" fill="none"/><path d="M1.500 11.500V1.500H11" stroke="#3fb0f4" stroke-width="1" stroke-dasharray="1.200 1" fill="none"/><path d="M1.800 12.800L12.300 1.800" stroke="#f5b731" stroke-width="1.100"/></svg>
<div class="mi" style="left:513px;top:518px">圆角(<span class="u">F</span>)</div>
<svg class="ic" style="left:488px;top:516px" width="16" height="16" viewBox="0 0 16 16"><path d="M11 1.500H14.500V13.500H1.500" stroke="#fff" stroke-width="1.100" fill="none"/><path d="M1.500 7V1.500H7" stroke="#3fb0f4" stroke-width="1" stroke-dasharray="1.200 1" fill="none"/><path d="M1.500 11.500Q2 2 11.500 1.500" stroke="#bb8c38" stroke-width="1.200" fill="none"/></svg>
<div class="mi" style="left:513px;top:547px">三维操作(<span class="u">3</span>)</div>
<div class="arr" style="left:689px;top:550px"></div>
<div class="mi" style="left:513px;top:570px">实体编辑(<span class="u">N</span>)</div>
<div class="arr" style="left:689px;top:573px"></div>
<div class="mi" style="left:513px;top:599px">更改空间(<span class="u">S</span>)</div>
<svg class="ic" style="left:488px;top:597px" width="16" height="16" viewBox="0 0 16 16"><rect x="2.600" y="1.800" width="5.600" height="5.200" fill="none" stroke="#fff" stroke-width="1.300"/><path d="M6.500 5.500H15V14H6.500Z" fill="#8e97a9"/><path d="M6.500 5.500H15V14H6.500ZM6.500 8.300H15M6.500 11.200H15M9.300 5.500V14M12.200 5.500V14" stroke="#fff" stroke-width="1" fill="none"/><path d="M8 8L11 13L11.300 10.800L13 10.500Z" fill="#3fb0f4"/><path d="M9.500 2.500H14.500V5M2 9.500V12.500H6" stroke="#fbc02d" stroke-width="1.200" fill="none" stroke-dasharray="2 .8"/></svg>
<div class="mi" style="left:513px;top:622px">分解(<span class="u">X</span>)</div>
<svg class="ic" style="left:488px;top:620px" width="17" height="16" viewBox="0 0 17 16"><circle cx="6" cy="8" r="6" fill="#ccd5e6"/><path d="M13.500 1.500V7M10.700 4.300H16.300M11.500 2.300L15.500 6.300M15.500 2.300L11.500 6.300" stroke="#fbc02d" stroke-width="1"/><circle cx="13.500" cy="4.300" r="1.100" fill="#3a4049"/></svg>
<div class="a" style="left:509px;top:124px;width:189px;height:1px;background:#474d58;"></div>
<div class="a" style="left:509px;top:153px;width:189px;height:1px;background:#474d58;"></div>
<div class="a" style="left:509px;top:274px;width:189px;height:1px;background:#474d58;"></div>
<div class="a" style="left:509px;top:395px;width:189px;height:1px;background:#474d58;"></div>
<div class="a" style="left:509px;top:539px;width:189px;height:1px;background:#474d58;"></div>
<div class="a" style="left:509px;top:591px;width:189px;height:1px;background:#474d58;"></div>
<div class="menu" style="left:693px;top:72px;width:220px;height:213px"></div>
<div class="a" style="left:722px;top:74px;width:1px;height:209px;background:#2d323a;"></div>
<div class="a" style="left:697px;top:214px;width:212px;height:21px;background:#545d69;border-radius:2px;box-shadow:0 1px 1px rgba(0,0,0,.35)"></div>
<div class="mi" style="left:727px;top:80px">图像(<span class="u">I</span>)</div>
<div class="arr" style="left:903px;top:83px"></div>
<div class="mi" style="left:727px;top:103px">图案填充(<span class="u">H</span>)...</div>
<svg class="ic" style="left:702px;top:101px" width="16" height="16" viewBox="0 0 16 16"><path d="M13.500 9V13.500H4.500M2.500 12.500V2.500H13.500V4.500" stroke="#fff" stroke-width="1" fill="none"/><path d="M4 7.500L8 3.500M4 10.500L11 3.500M6 12L12.500 5.500" stroke="#3fb0f4" stroke-width="1.200" stroke-dasharray="1.600 .500"/><path d="M4.500 14.500L13.500 5.500" stroke="#eaae30" stroke-width="1"/><circle cx="14.300" cy="4.800" r=".8" fill="#f5b731"/></svg>
<div class="mi" style="left:727px;top:126px">多段线(<span class="u">P</span>)</div>
<svg class="ic" style="left:702px;top:124px" width="16" height="16" viewBox="0 0 16 16"><path d="M7 5.500Q2.500 5.500 2.500 9Q2.500 10.500 4 11M9.500 12.500H14.500" stroke="#fff" stroke-width="1.100" fill="none"/><path d="M4.500 14.500L13 6" stroke="#eaae30" stroke-width="1"/><circle cx="14" cy="5" r=".8" fill="#f5b731"/></svg>
<div class="mi" style="left:727px;top:149px">样条曲线(<span class="u">S</span>)</div>
<svg class="ic" style="left:702px;top:147px" width="16" height="16" viewBox="0 0 16 16"><path d="M2.500 9Q4 3.500 7 6M10 13Q13 15.500 14.500 10" stroke="#fff" stroke-width="1.100" fill="none"/><path d="M4.500 14.500L13 6" stroke="#eaae30" stroke-width="1"/><circle cx="14" cy="5" r=".8" fill="#f5b731"/></svg>
<div class="mi" style="left:727px;top:172px">多重引线(<span class="u">U</span>)</div>
<div class="arr" style="left:903px;top:175px"></div>
<div class="mi" style="left:727px;top:195px">多线(<span class="u">M</span>)...</div>
<svg class="ic" style="left:702px;top:193px" width="16" height="17" viewBox="0 0 16 17"><path d="M3 3.500H13M3 8.500H10" stroke="#fff" stroke-width="1.200"/><path d="M1 2H4V5H1ZM12 2H15V5H12ZM1 7H4V10H1Z" fill="#3fb0f4"/><path d="M6 15.500L13.500 8" stroke="#eaae30" stroke-width="1"/><circle cx="14.500" cy="7" r=".8" fill="#f5b731"/></svg>
<div class="mi" style="left:727px;top:218px">属性(<span class="u">A</span>)</div>
<div class="arr" style="left:903px;top:221px"></div>
<div class="mi" style="left:727px;top:241px">块说明(<span class="u">B</span>)...</div>
<svg class="ic" style="left:702px;top:239px" width="16" height="16" viewBox="0 0 16 16"><path d="M5 3.500H11.500V9M2.500 6V14.500H9.500" stroke="#fff" stroke-width="1.100" fill="none"/><path d="M2 2.500H4V4.500H2Z" fill="#3fb0f4"/><circle cx="12" cy="13" r="2" fill="none" stroke="#fff" stroke-width="1.100"/></svg>
<div class="mi" style="left:727px;top:264px">文字编辑(<span class="u">E</span>)...</div>
<svg class="ic" style="left:702px;top:262px" width="16" height="16" viewBox="0 0 16 16"><path d="M3.500 14.500L7.500 3L10 10M4.500 11.500H8" stroke="#3fb0f4" stroke-width="1.200" fill="none"/><path d="M4.500 15.500L13 7" stroke="#eaae30" stroke-width="1"/><circle cx="14" cy="6" r=".8" fill="#f5b731"/></svg>
<div class="menu" style="left:476px;top:210px;width:221px;height:75px"></div>
<div class="a" style="left:505px;top:212px;width:1px;height:71px;background:#2d323a;"></div>
<div class="mi" style="left:510px;top:218px">单个(<span class="u">S</span>)...</div>
<svg class="ic" style="left:484px;top:216px" width="17" height="16" viewBox="0 0 17 16"><g fill="none" stroke="#3fb0f4" stroke-width="1"><rect x="2.200" y="1.400" width="2.600" height="2.600"/><rect x="2.200" y="6.300" width="2.600" height="2.600"/><rect x="2.200" y="11.500" width="2.600" height="2.600"/></g><path d="M7.800 2.500H15M7.800 7.200H13.200" stroke="#fff" stroke-width="1.200"/><path d="M7.800 14.800L14 9.300" stroke="#eaae30" stroke-width="1"/><circle cx="15.500" cy="7" r=".8" fill="#f5b731"/><circle cx="14.500" cy="12.500" r=".7" fill="#fff"/></svg>
<div class="mi" style="left:510px;top:241px">多重(<span class="u">G</span>)</div>
<svg class="ic" style="left:484px;top:239px" width="17" height="17" viewBox="0 0 17 17"><path d="M4.500 2H2.200V4.500M4.500 7H2.200V9.500M4.500 12H2.200V14.500" stroke="#3fb0f4" stroke-width="1.100" fill="none"/><path d="M4 3.200H6.300V5.500H4ZM4 8.200H6.300V10.500H4ZM4 13.200H6.300V15.500H4Z" fill="#3fb0f4"/><path d="M7.500 2.500H15M7.500 7.400H14" stroke="#fff" stroke-width="1.200"/><path d="M7.500 15L14 9" stroke="#eaae30" stroke-width="1"/><circle cx="15.500" cy="7.400" r=".8" fill="#f5b731"/><circle cx="7.800" cy="12" r=".7" fill="#fff"/><circle cx="14.500" cy="12.300" r=".7" fill="#fff"/></svg>
<div class="mi" style="left:510px;top:264px">块属性管理器(<span class="u">B</span>)...</div>
<svg class="ic" style="left:484px;top:262px" width="18" height="18" viewBox="0 0 18 18"><path d="M5.500 6.500V.5H14.500V6.500M5 4.500H1.500V11.500H4.500" stroke="#fff" stroke-width="1.100" fill="none"/><path d="M8 7Q4 11.500 8 16" stroke="#c8c8c8" stroke-width="1.100" fill="none"/><rect x="10.200" y="7.400" width="6.500" height="7.400" fill="#3a4049" stroke="#fff" stroke-width="1.200"/><path d="M9.600 6.800H17.300V9H9.600Z" fill="#3fb0f4"/><path d="M12 11.500H15M12 13.500H15" stroke="#3fb0f4" stroke-width="1"/></svg>
<div class="red" style="left:479px;top:7px;width:64px;height:19px"></div>
<div class="red" style="left:501px;top:72px;width:72px;height:25px"></div>
<div class="red" style="left:716px;top:208px;width:68px;height:29px"></div>
<div class="red" style="left:490px;top:211px;width:86px;height:24px"></div>
<div class="circ" style="left:538.5px;top:-10.5px"></div>
<div class="circ" style="left:560.5px;top:51.5px">2</div>
<div class="circ" style="left:778.5px;top:173.5px">3</div>
<div class="circ" style="left:574.5px;top:182.5px">4</div>
<svg class="ic" style="left:550px;top:0" width="16" height="16" viewBox="550 0 16 16"><path d="M557.700 1.300H561.300V14.400H558.300V5.300Q556.500 6.700 554 7.400V5Q556.700 4 557.700 1.300Z" fill="#fff"/></svg>
</body></html>
